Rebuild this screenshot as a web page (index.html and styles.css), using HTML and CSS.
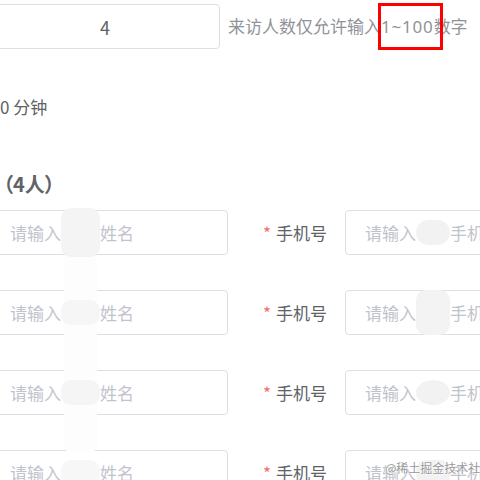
FILE: index.html
```html
<!DOCTYPE html>
<html lang="zh-CN">
<head>
<meta charset="utf-8">
<title>来访登记</title>
<link rel="stylesheet" href="styles.css">
</head>
<body>
<div class="page">
  <div class="count-row">
    <div class="box box-count">4</div>
    <div class="hint">来访人数仅允许输入<span class="hl">1~100</span>数字</div>
  </div>
  <div class="duration">0 分钟</div>
  <div class="section-title">（4人）</div>
  <div class="visitors">
    <div class="visitor">
      <div class="box box-name"><span class="ph">请输入<span class="blur b1">访客</span>姓名</span></div>
      <div class="label"><span class="req">*</span>手机号</div>
      <div class="box box-phone"><span class="ph">请输入<span class="blur p1">访客</span>手机号</span></div>
    </div>
    <div class="visitor">
      <div class="box box-name"><span class="ph">请输入<span class="blur b2">访客</span>姓名</span></div>
      <div class="label"><span class="req">*</span>手机号</div>
      <div class="box box-phone"><span class="ph">请输入<span class="blur p2">访客</span>手机号</span></div>
    </div>
    <div class="visitor">
      <div class="box box-name"><span class="ph">请输入<span class="blur b3">访客</span>姓名</span></div>
      <div class="label"><span class="req">*</span>手机号</div>
      <div class="box box-phone"><span class="ph">请输入<span class="blur p3">访客</span>手机号</span></div>
    </div>
    <div class="visitor">
      <div class="box box-name"><span class="ph">请输入<span class="blur b4">访客</span>姓名</span></div>
      <div class="label"><span class="req">*</span>手机号</div>
      <div class="box box-phone"><span class="ph">请输入<span class="blur p4">访客</span>手机号</span></div>
    </div>
    <div class="strip"></div>
  </div>
</div>
<div class="watermark">@稀土掘金技术社区</div>
</body>
</html>
```
FILE: styles.css
```css
html, body {
  margin: 0;
  padding: 0;
  background: #ffffff;
}
body {
  width: 480px;
  height: 480px;
  overflow: hidden;
  position: relative;
  font-family: "Noto Sans CJK SC", "Noto Sans", sans-serif;
  font-size: 17px;
  color: #606266;
}
.page {
  display: flex;
  flex-direction: column;
  padding-top: 4px;
}
.box {
  box-sizing: border-box;
  height: 45px;
  border: 1px solid #dcdfe6;
  border-radius: 4px;
  background: #fff;
  display: flex;
  align-items: center;
  flex-shrink: 0;
}
.count-row {
  display: flex;
  align-items: center;
}
.box-count {
  margin-left: -10px;
  width: 230px;
  justify-content: center;
  color: #606266;
  font-size: 18px;
}
.hint {
  margin-left: 8px;
  color: #909399;
  white-space: nowrap;
  line-height: 24px;
}
.hl {
  position: relative;
  font-family: "Noto Sans", "Noto Sans CJK SC", sans-serif;
  letter-spacing: 0.8px;
}
.hl::after {
  content: "";
  position: absolute;
  left: -3px;
  top: -12px;
  width: 65px;
  height: 47px;
  box-sizing: border-box;
  border: 3px solid #ff0000;
}
.duration {
  margin-top: 46px;
  line-height: 24px;
}
.section-title {
  margin-top: 53px;
  margin-left: 3px;
  line-height: 24px;
  font-size: 20px;
  font-weight: 700;
  color: #606266;
  font-feature-settings: "palt";
}
.visitors {
  position: relative;
  margin-top: 14px;
  display: flex;
  flex-direction: column;
  gap: 35px;
}
.visitor {
  display: flex;
  align-items: center;
}
.box-name {
  margin-left: -6px;
  width: 234px;
  padding-left: 15px;
}
.box-phone {
  width: 200px;
  padding-left: 19px;
}
.label {
  width: 117px;
  flex-shrink: 0;
  box-sizing: border-box;
  padding-right: 18px;
  text-align: right;
  white-space: nowrap;
  color: #606266;
}
.req {
  color: #f56c6c;
  margin-right: 5px;
}
.ph {
  color: #c0c4cc;
  white-space: nowrap;
}
.blur {
  position: relative;
  z-index: 2;
  display: inline-block;
  color: transparent;
  background: #f2f2f3;
  border-radius: 10px;
}
.b1, .b2, .b3, .b4 { padding-right: 5px; }
.b1 { padding-top: 12px; padding-bottom: 12px; margin: -12px 0; background: #f4f4f5; }
.b2 { background: #f6f6f7; }
.b3 { background: #f5f5f6; }
.b4 { background: #f7f7f8; }
.p1 { border-radius: 14px; }
.p2 { padding: 10px 0; margin: -10px 0; background: #f3f3f4; }
.p3 { border-radius: 50%; }
.strip {
  position: absolute;
  left: 64px;
  width: 33px;
  top: 44px;
  height: 198px;
  background: #fdfdfd;
  border-radius: 6px;
  z-index: 1;
}
.watermark {
  position: absolute;
  z-index: 5;
  left: 385px;
  top: 460px;
  font-size: 12px;
  line-height: 16px;
  color: #9a9a9a;
  white-space: nowrap;
  text-shadow: 0 0 2px #fff, 0 0 2px #fff;
}
```
